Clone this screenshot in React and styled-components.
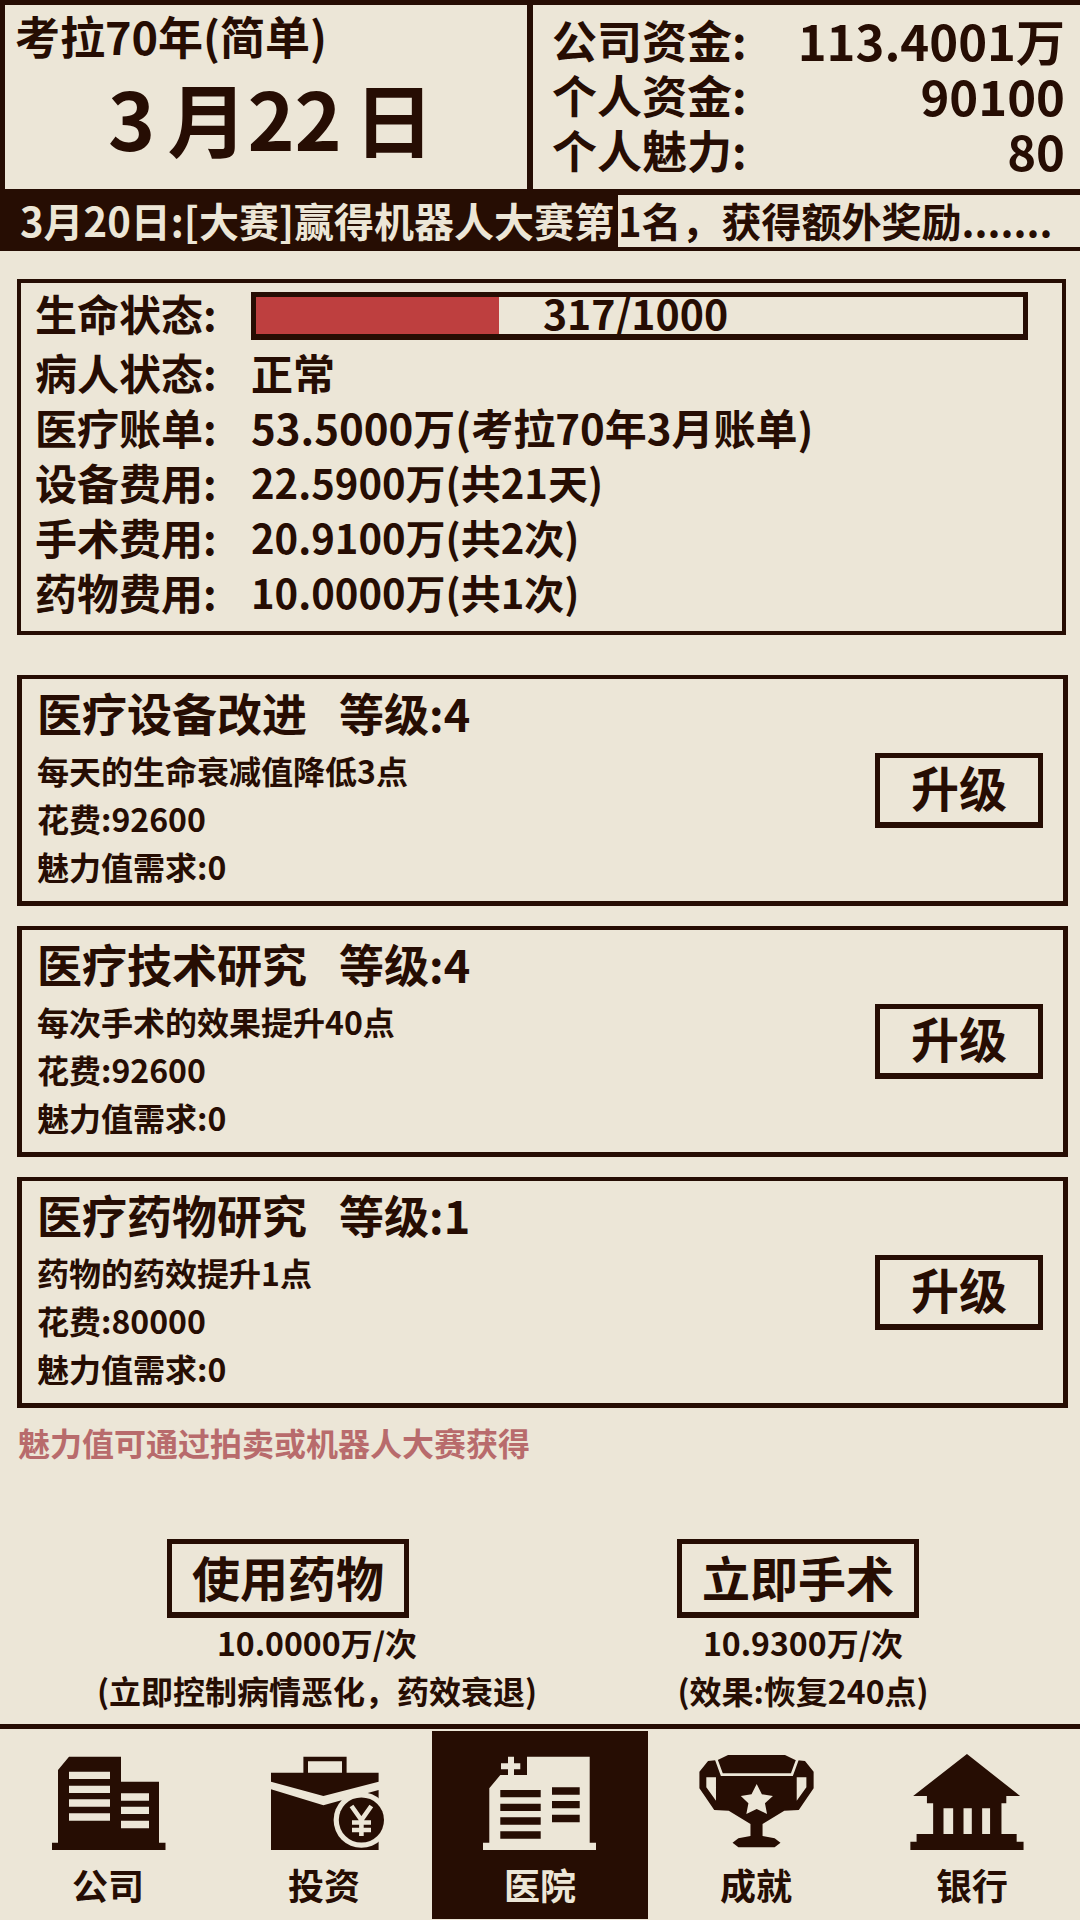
import React from 'react'
import styled, { createGlobalStyle } from 'styled-components'

const INK = '#260d03'
const PAPER = '#ece6d7'

const GlobalStyle = createGlobalStyle`
  html, body {
    margin: 0;
    padding: 0;
    background: ${PAPER};
  }
  * {
    box-sizing: border-box;
  }
`

const Page = styled.div`
  width: 1080px;
  height: 1920px;
  display: flex;
  flex-direction: column;
  overflow: hidden;
  background: ${PAPER};
  color: ${INK};
  font-family: "Noto Sans CJK SC", "Noto Sans", sans-serif;
  font-weight: 700;
`

const Header = styled.header`
  display: flex;
  height: 189px;
  border-top: 5px solid ${INK};
  border-left: 5px solid ${INK};
`

const DatePanel = styled.div`
  width: 522px;
  padding: 7px 0 0 10px;
`

const Era = styled.div`
  font-size: 45px;
  line-height: 48px;
`

const DateText = styled.div`
  font-size: 80px;
  line-height: 92px;
  margin-top: 10px;
  text-align: center;
  white-space: pre;
  word-spacing: -6px;
`

const FundsPanel = styled.div`
  flex: 1;
  display: flex;
  flex-direction: column;
  padding: 7px 13px 0 19px;
  border-left: 6px solid ${INK};
`

const FundRow = styled.div`
  display: flex;
  justify-content: space-between;
  height: 55px;
  line-height: 55px;
  font-size: 45px;
`

const FundValue = styled.span`
  font-size: 49px;
  margin-right: 2px;
`

const Ticker = styled.div`
  display: flex;
  height: 62px;
  border-top: 6px solid ${INK};
  border-bottom: 4px solid ${INK};
  font-size: 40px;
  line-height: 50px;
  white-space: nowrap;
`

const TickerLead = styled.div`
  width: 618px;
  padding-left: 20px;
  background: ${INK};
  color: ${PAPER};
`

const StatusBox = styled.section`
  margin: 28px 14px 0 17px;
  padding: 5px 14px 9px;
  border: 4px solid ${INK};
  display: flex;
  flex-direction: column;
`

const StatusRow = styled.div`
  display: flex;
  align-items: center;
  height: 55px;
  margin-bottom: ${(p) => (p.$first ? '4px' : '0')};
`

const StatusLabel = styled.span`
  width: 216px;
  flex: none;
  padding-bottom: 6px;
  font-size: 42px;
  white-space: nowrap;
`

const StatusValue = styled.span`
  padding-bottom: 6px;
  font-size: ${(p) => p.$size}px;
  white-space: nowrap;
`

const LifeBar = styled.div`
  position: relative;
  width: 777px;
  height: 48px;
  border: 5px solid ${INK};
  border-bottom-width: 6px;
`

const LifeFill = styled.div`
  height: 100%;
  background: #be3f3f;
`

const LifeText = styled.span`
  position: absolute;
  inset: 0;
  display: flex;
  align-items: center;
  justify-content: center;
  padding: 0 8px 6px 0;
  font-size: 41px;
`

const CardList = styled.div`
  display: flex;
  flex-direction: column;
  gap: 20px;
  margin: 40px 12px 0 17px;
`

const Card = styled.article`
  height: 231px;
  display: flex;
  align-items: center;
  justify-content: space-between;
  padding: 0 20px 0 15px;
  border: solid ${INK};
  border-width: 4px 5px 5px;
`

const CardBody = styled.div`
  display: flex;
  flex-direction: column;
  margin-top: -8px;
`

const CardTitle = styled.h3`
  display: flex;
  gap: 32px;
  margin: 0 0 3px;
  font-size: 45px;
  line-height: 60px;
  font-weight: 700;
  white-space: nowrap;
`

const CardLine = styled.div`
  font-size: 32px;
  line-height: 48px;
`

const OutlineButton = styled.button`
  display: flex;
  align-items: center;
  justify-content: center;
  width: ${(p) => p.$width}px;
  height: ${(p) => p.$height}px;
  margin-right: ${(p) => p.$offset || 0}px;
  padding: 0 0 4px;
  background: transparent;
  border: solid ${INK};
  border-width: 5px 5px 6px;
  color: ${INK};
  font: inherit;
  font-size: 48px;
  line-height: 1;
`

const UpgradeButton = styled(OutlineButton)`
  padding-bottom: 8px;
`

const Hint = styled.p`
  margin: 10px 0 0 18px;
  font-size: 32px;
  line-height: 48px;
  color: #b86b6c;
`

const Actions = styled.div`
  display: grid;
  grid-template-columns: 600px 372px;
  margin: 73px 0 0 17px;
`

const Action = styled.div`
  display: flex;
  flex-direction: column;
  align-items: center;
`

const ActionText = styled.div`
  font-size: 32px;
  line-height: 48px;
  white-space: nowrap;
`

const Nav = styled.nav`
  margin-top: auto;
  display: grid;
  grid-template-columns: repeat(5, 216px);
  padding: 2px 0 1px;
  border-top: 5px solid ${INK};
`

const Tab = styled.div`
  height: 188px;
  display: flex;
  flex-direction: column;
  align-items: center;
  padding-top: 19px;
  background: ${(p) => (p.$active ? INK : 'transparent')};
  color: ${(p) => (p.$active ? PAPER : INK)};
`

const TabLabel = styled.span`
  margin-top: 2px;
  font-size: 36px;
  line-height: 44px;
`

const IconSvg = styled.svg`
  display: block;
  width: 216px;
  height: 110px;
  flex: none;
`

const CompanyIcon = () => (
  <IconSvg viewBox="0 0 216 110">
    <path fill={INK} d="M58 20 69 6.7H121V31.7H159V92.7H165.5V100H52V92.7H58Z" />
    <path
      fill={PAPER}
      d="M69 21.7H110V29H69ZM69 35.7H110V43H69ZM69 49.3H110V56.7H69ZM69 63.3H110V70.7H69ZM121 43.3H149V50.7H121ZM121 56.7H149V64H121ZM121 70.7H149V78.3H121Z"
    />
  </IconSvg>
)

const InvestIcon = () => (
  <IconSvg viewBox="0 0 216 110">
    <path
      fill={INK}
      fillRule="evenodd"
      d="M87.4 22.7V6.7H130.6V22.7H162.6V31.7L107.4 46 55 31.7V22.7ZM92 22.7H126V11.3H92Z"
    />
    <path fill={INK} d="M55 39.3 107.4 55.3 162.6 40V100H55Z" />
    <circle cx="145.4" cy="70" r="27.8" fill={PAPER} />
    <circle cx="145.4" cy="70" r="22.6" fill={INK} />
    <path
      fill="none"
      stroke={PAPER}
      strokeWidth="4.6"
      d="M135.5 56 145.4 70 155.3 56M136 72.5H155M136 80H155M145.4 70V86"
    />
  </IconSvg>
)

const HospitalIcon = () => (
  <IconSvg viewBox="0 0 216 110">
    <path
      fill={PAPER}
      d="M57.3 38.3 68.3 25H95V6.7H157.7V92.7H164V100H51V92.7H57.3ZM76 6.7H82V13.3H88.3V19.3H82V25H76V19.3H69V13.3H76Z"
    />
    <path
      fill={INK}
      d="M68.3 40H108.7V47.3H68.3ZM68.3 53.7H108.7V61H68.3ZM68.3 67.3H108.7V74.7H68.3ZM68.3 81.3H108.7V88.7H68.3ZM120 37.3H147.7V44.7H120ZM120 51H147.7V58.3H120ZM120 64.7H147.7V72.3H120Z"
    />
  </IconSvg>
)

// trophy and bank are traced from the zoomed crop, hence the odd viewBox
const TrophyIcon = () => (
  <IconSvg viewBox="313 150 626 330" preserveAspectRatio="none">
    <path
      fill={INK}
      d="M545 165H710L740 180 768 183 793 215V265L750 330 708 332 645 372V408L680 415 697 428 680 442H575L558 428 575 415 610 408V372L547 332 505 330 462 265V215L487 183 515 180Z"
    />
    <path
      fill={PAPER}
      d="M482 232H510V302L482 262ZM772 232H744V302L772 262ZM628 252 643 283 675 288 652 310 658 342 628 327 598 342 604 310 582 288 613 283Z"
    />
    <path
      fill="none"
      stroke={PAPER}
      strokeWidth="8"
      d="M510 176 527 224H730L747 176"
    />
  </IconSvg>
)

const BankIcon = () => (
  <IconSvg viewBox="939.6 150 626 330" preserveAspectRatio="none">
    <path
      fill={INK}
      d="M1238 162 1392 288H1352V310H1338V402H1382V425H1402V450H1074V425H1092V402H1140V310H1122V288H1082Z"
    />
    <path fill={PAPER} d="M1170 325H1198V402H1170ZM1228 325H1252V402H1228ZM1282 325H1305V402H1282Z" />
  </IconSvg>
)

const tabs = [
  { label: '公司', Icon: CompanyIcon },
  { label: '投资', Icon: InvestIcon },
  { label: '医院', Icon: HospitalIcon, active: true },
  { label: '成就', Icon: TrophyIcon },
  { label: '银行', Icon: BankIcon },
]

const bills = [
  ['病人状态:', '正常', 42],
  ['医疗账单:', '53.5000万(考拉70年3月账单)', 42],
  ['设备费用:', '22.5900万(共21天)', 40],
  ['手术费用:', '20.9100万(共2次)', 40],
  ['药物费用:', '10.0000万(共1次)', 40],
]

const upgrades = [
  { name: '医疗设备改进', level: 4, effect: '每天的生命衰减值降低3点', cost: 92600 },
  { name: '医疗技术研究', level: 4, effect: '每次手术的效果提升40点', cost: 92600 },
  { name: '医疗药物研究', level: 1, effect: '药物的药效提升1点', cost: 80000 },
]

const App = () => {
  const life = 317
  return (
    <Page>
      <GlobalStyle />
      <Header>
        <DatePanel>
          <Era>考拉70年(简单)</Era>
          <DateText>3 月22 日</DateText>
        </DatePanel>
        <FundsPanel>
          <FundRow>
            <span>公司资金:</span>
            <FundValue>113.4001万</FundValue>
          </FundRow>
          <FundRow>
            <span>个人资金:</span>
            <FundValue>90100</FundValue>
          </FundRow>
          <FundRow>
            <span>个人魅力:</span>
            <FundValue>80</FundValue>
          </FundRow>
        </FundsPanel>
      </Header>
      <Ticker>
        <TickerLead>3月20日:[大赛]赢得机器人大赛第</TickerLead>
        <span>1名，获得额外奖励.......</span>
      </Ticker>

      <StatusBox>
        <StatusRow $first>
          <StatusLabel>生命状态:</StatusLabel>
          <LifeBar>
            <LifeFill style={{ width: `${(life / 1000) * 100}%` }} />
            <LifeText>{life}/1000</LifeText>
          </LifeBar>
        </StatusRow>
        {bills.map(([label, value, size]) => (
          <StatusRow key={label}>
            <StatusLabel>{label}</StatusLabel>
            <StatusValue $size={size}>{value}</StatusValue>
          </StatusRow>
        ))}
      </StatusBox>

      <CardList>
        {upgrades.map((item) => (
          <Card key={item.name}>
            <CardBody>
              <CardTitle>
                <span>{item.name}</span>
                <span>等级:{item.level}</span>
              </CardTitle>
              <CardLine>{item.effect}</CardLine>
              <CardLine>花费:{item.cost}</CardLine>
              <CardLine>魅力值需求:0</CardLine>
            </CardBody>
            <UpgradeButton $width={168} $height={75}>升级</UpgradeButton>
          </Card>
        ))}
      </CardList>

      <Hint>魅力值可通过拍卖或机器人大赛获得</Hint>

      <Actions>
        <Action>
          <OutlineButton $width={242} $height={79} $offset={58}>使用药物</OutlineButton>
          <ActionText>10.0000万/次</ActionText>
          <ActionText>(立即控制病情恶化，药效衰退)</ActionText>
        </Action>
        <Action>
          <OutlineButton $width={242} $height={79} $offset={10}>立即手术</OutlineButton>
          <ActionText>10.9300万/次</ActionText>
          <ActionText>(效果:恢复240点)</ActionText>
        </Action>
      </Actions>

      <Nav>
        {tabs.map(({ label, Icon, active }) => (
          <Tab key={label} $active={active}>
            <Icon />
            <TabLabel>{label}</TabLabel>
          </Tab>
        ))}
      </Nav>
    </Page>
  )
}

export default App
